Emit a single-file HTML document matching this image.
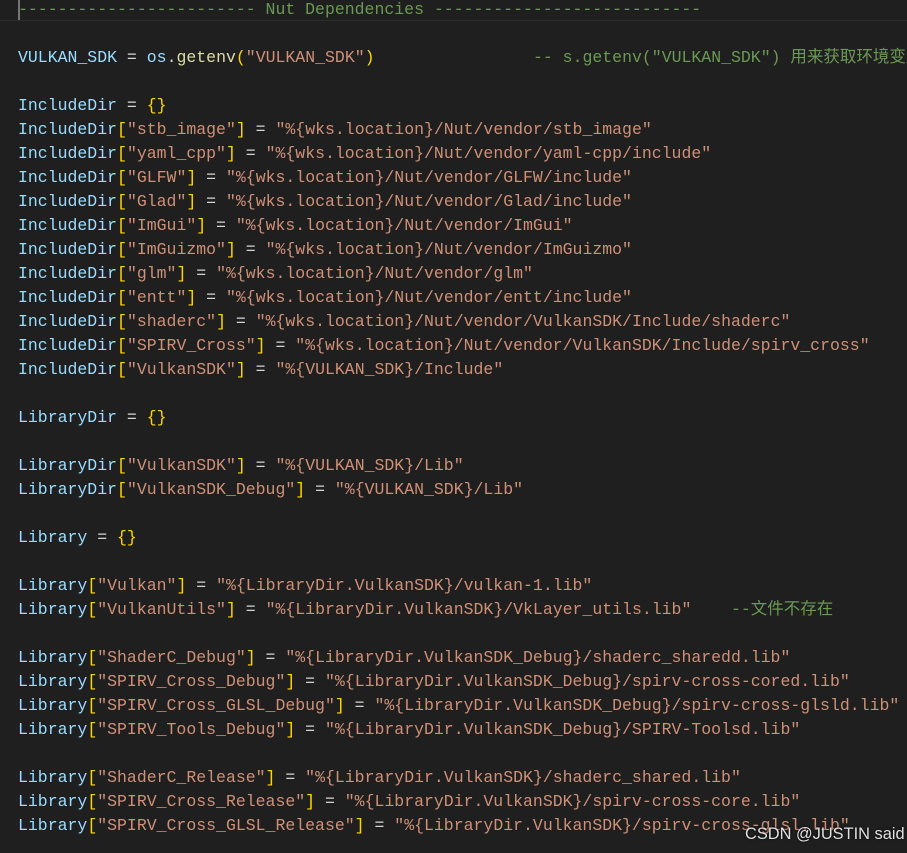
<!DOCTYPE html>
<html><head><meta charset="utf-8"><style>
html,body{margin:0;padding:0;background:#1f1f1f;width:907px;height:853px;overflow:hidden}
pre{margin:0;position:absolute;left:18px;top:-2px;font-family:"Liberation Mono","Noto Sans CJK SC",monospace;font-size:16.5px;line-height:24px;color:#d4d4d4;white-space:pre}
.v{color:#9cdcfe}.s{color:#ce9178}.b{color:#ffd700}.c{color:#6a9955}.f{color:#dcdcaa}
#cur{position:absolute;left:0;top:-3px;width:907px;height:22px;border-top:1px solid #2c2c2c;border-bottom:1px solid #2c2c2c}
#caret{position:absolute;left:18px;top:0;width:2px;height:20px;background:#aeafad;opacity:.6}
#wm{position:absolute;left:745px;top:825px;font-family:"Liberation Sans",sans-serif;font-size:16.4px;color:#e0e0e0;text-shadow:0 0 2px #000}
</style></head><body>
<div id="cur"></div><div id="caret"></div>
<pre><span class="c">------------------------ Nut Dependencies ---------------------------</span>

<span class="v">VULKAN_SDK</span> = <span class="v">os</span>.<span class="f">getenv</span><span class="b">(</span><span class="s">"VULKAN_SDK"</span><span class="b">)</span>                <span class="c">-- s.getenv("VULKAN_SDK") 用来获取环境变量</span>

<span class="v">IncludeDir</span> = <span class="b">{}</span>
<span class="v">IncludeDir</span><span class="b">[</span><span class="s">"stb_image"</span><span class="b">]</span> = <span class="s">"%{wks.location}/Nut/vendor/stb_image"</span>
<span class="v">IncludeDir</span><span class="b">[</span><span class="s">"yaml_cpp"</span><span class="b">]</span> = <span class="s">"%{wks.location}/Nut/vendor/yaml-cpp/include"</span>
<span class="v">IncludeDir</span><span class="b">[</span><span class="s">"GLFW"</span><span class="b">]</span> = <span class="s">"%{wks.location}/Nut/vendor/GLFW/include"</span>
<span class="v">IncludeDir</span><span class="b">[</span><span class="s">"Glad"</span><span class="b">]</span> = <span class="s">"%{wks.location}/Nut/vendor/Glad/include"</span>
<span class="v">IncludeDir</span><span class="b">[</span><span class="s">"ImGui"</span><span class="b">]</span> = <span class="s">"%{wks.location}/Nut/vendor/ImGui"</span>
<span class="v">IncludeDir</span><span class="b">[</span><span class="s">"ImGuizmo"</span><span class="b">]</span> = <span class="s">"%{wks.location}/Nut/vendor/ImGuizmo"</span>
<span class="v">IncludeDir</span><span class="b">[</span><span class="s">"glm"</span><span class="b">]</span> = <span class="s">"%{wks.location}/Nut/vendor/glm"</span>
<span class="v">IncludeDir</span><span class="b">[</span><span class="s">"entt"</span><span class="b">]</span> = <span class="s">"%{wks.location}/Nut/vendor/entt/include"</span>
<span class="v">IncludeDir</span><span class="b">[</span><span class="s">"shaderc"</span><span class="b">]</span> = <span class="s">"%{wks.location}/Nut/vendor/VulkanSDK/Include/shaderc"</span>
<span class="v">IncludeDir</span><span class="b">[</span><span class="s">"SPIRV_Cross"</span><span class="b">]</span> = <span class="s">"%{wks.location}/Nut/vendor/VulkanSDK/Include/spirv_cross"</span>
<span class="v">IncludeDir</span><span class="b">[</span><span class="s">"VulkanSDK"</span><span class="b">]</span> = <span class="s">"%{VULKAN_SDK}/Include"</span>

<span class="v">LibraryDir</span> = <span class="b">{}</span>

<span class="v">LibraryDir</span><span class="b">[</span><span class="s">"VulkanSDK"</span><span class="b">]</span> = <span class="s">"%{VULKAN_SDK}/Lib"</span>
<span class="v">LibraryDir</span><span class="b">[</span><span class="s">"VulkanSDK_Debug"</span><span class="b">]</span> = <span class="s">"%{VULKAN_SDK}/Lib"</span>

<span class="v">Library</span> = <span class="b">{}</span>

<span class="v">Library</span><span class="b">[</span><span class="s">"Vulkan"</span><span class="b">]</span> = <span class="s">"%{LibraryDir.VulkanSDK}/vulkan-1.lib"</span>
<span class="v">Library</span><span class="b">[</span><span class="s">"VulkanUtils"</span><span class="b">]</span> = <span class="s">"%{LibraryDir.VulkanSDK}/VkLayer_utils.lib"</span>    <span class="c">--文件不存在</span>

<span class="v">Library</span><span class="b">[</span><span class="s">"ShaderC_Debug"</span><span class="b">]</span> = <span class="s">"%{LibraryDir.VulkanSDK_Debug}/shaderc_sharedd.lib"</span>
<span class="v">Library</span><span class="b">[</span><span class="s">"SPIRV_Cross_Debug"</span><span class="b">]</span> = <span class="s">"%{LibraryDir.VulkanSDK_Debug}/spirv-cross-cored.lib"</span>
<span class="v">Library</span><span class="b">[</span><span class="s">"SPIRV_Cross_GLSL_Debug"</span><span class="b">]</span> = <span class="s">"%{LibraryDir.VulkanSDK_Debug}/spirv-cross-glsld.lib"</span>
<span class="v">Library</span><span class="b">[</span><span class="s">"SPIRV_Tools_Debug"</span><span class="b">]</span> = <span class="s">"%{LibraryDir.VulkanSDK_Debug}/SPIRV-Toolsd.lib"</span>

<span class="v">Library</span><span class="b">[</span><span class="s">"ShaderC_Release"</span><span class="b">]</span> = <span class="s">"%{LibraryDir.VulkanSDK}/shaderc_shared.lib"</span>
<span class="v">Library</span><span class="b">[</span><span class="s">"SPIRV_Cross_Release"</span><span class="b">]</span> = <span class="s">"%{LibraryDir.VulkanSDK}/spirv-cross-core.lib"</span>
<span class="v">Library</span><span class="b">[</span><span class="s">"SPIRV_Cross_GLSL_Release"</span><span class="b">]</span> = <span class="s">"%{LibraryDir.VulkanSDK}/spirv-cross-glsl.lib"</span>
</pre>
<div id="wm">CSDN @JUSTIN said</div>
</body></html>
